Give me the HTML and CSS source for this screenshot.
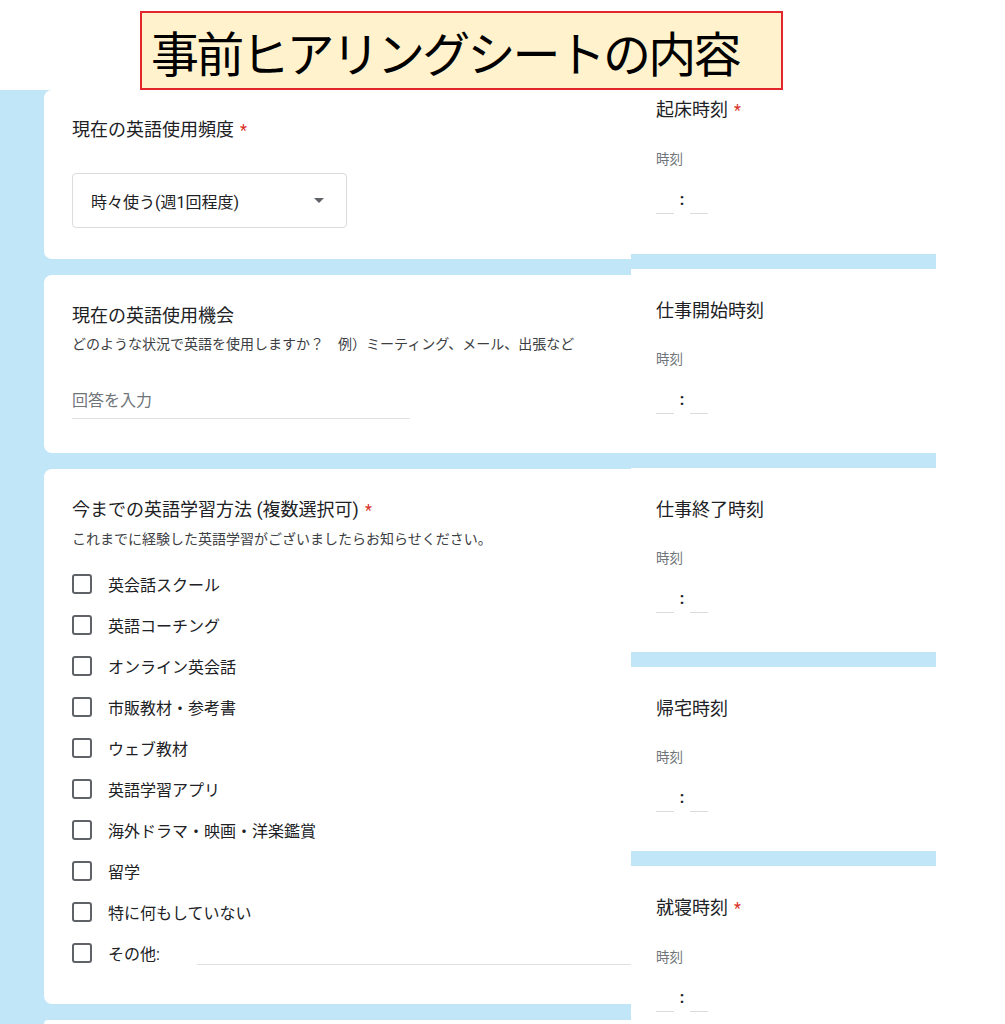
FILE: index.html
```html
<!DOCTYPE html>
<html lang="ja">
<head>
<meta charset="utf-8">
<title>事前ヒアリングシートの内容</title>
<link rel="stylesheet" href="styles.css">
</head>
<body>
<header class="header">
  <h1 class="title">事前ヒアリングシートの内容</h1>
</header>
<main class="board">
  <section class="left">
    <div class="card card-select">
      <div class="q-title">現在の英語使用頻度<span class="req">*</span></div>
      <div class="select">
        <span>時々使う(週1回程度)</span>
        <span class="arrow"></span>
      </div>
    </div>
    <div class="card card-text">
      <div class="q-title">現在の英語使用機会</div>
      <div class="q-desc">どのような状況で英語を使用しますか？　例）ミーティング、メール、出張など</div>
      <div class="text-input">回答を入力</div>
    </div>
    <div class="card card-check">
      <div class="q-title">今までの英語学習方法 (複数選択可)<span class="req">*</span></div>
      <div class="q-desc">これまでに経験した英語学習がございましたらお知らせください。</div>
      <ul class="options">
        <li class="option"><span class="box"></span><span>英会話スクール</span></li>
        <li class="option"><span class="box"></span><span>英語コーチング</span></li>
        <li class="option"><span class="box"></span><span>オンライン英会話</span></li>
        <li class="option"><span class="box"></span><span>市販教材・参考書</span></li>
        <li class="option"><span class="box"></span><span>ウェブ教材</span></li>
        <li class="option"><span class="box"></span><span>英語学習アプリ</span></li>
        <li class="option"><span class="box"></span><span>海外ドラマ・映画・洋楽鑑賞</span></li>
        <li class="option"><span class="box"></span><span>留学</span></li>
        <li class="option"><span class="box"></span><span>特に何もしていない</span></li>
        <li class="option"><span class="box"></span><span>その他:</span><span class="other-line"></span></li>
      </ul>
    </div>
    <div class="card card-next"></div>
  </section>
  <section class="right">
    <div class="panel panel-first">
      <div class="p-title">起床時刻<span class="req">*</span></div>
      <div class="p-sub">時刻</div>
      <div class="time"><span class="tbox"></span><span class="colon">:</span><span class="tbox"></span></div>
    </div>
    <div class="panel">
      <div class="p-title">仕事開始時刻</div>
      <div class="p-sub">時刻</div>
      <div class="time"><span class="tbox"></span><span class="colon">:</span><span class="tbox"></span></div>
    </div>
    <div class="panel">
      <div class="p-title">仕事終了時刻</div>
      <div class="p-sub">時刻</div>
      <div class="time"><span class="tbox"></span><span class="colon">:</span><span class="tbox"></span></div>
    </div>
    <div class="panel">
      <div class="p-title">帰宅時刻</div>
      <div class="p-sub">時刻</div>
      <div class="time"><span class="tbox"></span><span class="colon">:</span><span class="tbox"></span></div>
    </div>
    <div class="panel panel-last">
      <div class="p-title">就寝時刻<span class="req">*</span></div>
      <div class="p-sub">時刻</div>
      <div class="time"><span class="tbox"></span><span class="colon">:</span><span class="tbox"></span></div>
    </div>
  </section>
</main>
</body>
</html>
```
FILE: styles.css
```css
* { box-sizing: border-box; }

html, body {
  margin: 0;
  padding: 0;
  background: #ffffff;
}

body {
  width: 1005px;
  height: 1024px;
  overflow: hidden;
  font-family: Roboto, "Noto Sans CJK JP", sans-serif;
  color: #202124;
}

.header {
  padding: 11px 0 0 140px;
  height: 90px;
}

.title {
  margin: 0;
  width: 643px;
  height: 79px;
  border: 2px solid #e3262b;
  background: #fff2cc;
  display: flex;
  align-items: center;
  padding-left: 9px;
  font-family: "Noto Sans CJK JP", sans-serif;
  font-weight: 400;
  font-size: 48px;
  letter-spacing: -2.8px;
  line-height: 1;
  color: #000000;
}

.board {
  display: flex;
  height: 934px;
}

/* left column */
.left {
  width: 631px;
  background: #c0e6f8;
  padding-left: 44px;
  display: flex;
  flex-direction: column;
  gap: 16px;
}

.card {
  background: #ffffff;
  border-radius: 8px 0 0 8px;
  padding-left: 28px;
}

.card-select { padding-top: 28px; padding-bottom: 31px; }
.card-text { padding-top: 29px; padding-bottom: 34px; }
.card-check { padding-top: 29px; padding-bottom: 31px; }
.card-next { height: 6px; border-radius: 8px 0 0 0; }

.q-title {
  font-size: 18px;
  line-height: 24px;
  color: #202124;
}

.req {
  color: #d93025;
  font-size: 16px;
  margin-left: 6px;
}

.q-desc {
  margin-top: 6px;
  font-size: 14px;
  line-height: 20px;
  color: #3c4043;
}

.select {
  margin-top: 30px;
  width: 275px;
  height: 55px;
  border: 1px solid #dadce0;
  border-radius: 4px;
  display: flex;
  align-items: center;
  justify-content: space-between;
  padding: 0 22px 0 18px;
  font-size: 16px;
  color: #202124;
}

.arrow {
  width: 0;
  height: 0;
  border-left: 5px solid transparent;
  border-right: 5px solid transparent;
  border-top: 5px solid #5f6368;
}

.text-input {
  margin-top: 35px;
  width: 338px;
  font-size: 16px;
  line-height: 24px;
  padding-bottom: 5px;
  border-bottom: 1px solid #e0e0e0;
  color: #70757a;
}

.options {
  list-style: none;
  margin: 14px 0 0 0;
  padding: 0;
}

.option {
  display: flex;
  align-items: center;
  gap: 16px;
  height: 41px;
  font-size: 16px;
  color: #202124;
}

.box {
  width: 20px;
  height: 20px;
  border: 2px solid #5f6368;
  border-radius: 3px;
  flex: none;
}

.other-line {
  flex: 1;
  height: 1px;
  background: #e0e0e0;
  align-self: flex-end;
  margin: 0 0 8px 21px;
}

/* right column */
.right {
  width: 305px;
  background: #c0e6f8;
  display: flex;
  flex-direction: column;
  gap: 15px;
}

.panel {
  background: #ffffff;
  padding: 30px 0 39px 25px;
}

.panel-first { padding-top: 8px; padding-bottom: 40px; }
.panel-last { flex: 1; }

.p-title {
  font-size: 18px;
  line-height: 24px;
  color: #202124;
}

.p-sub {
  margin-top: 26px;
  font-size: 13.5px;
  line-height: 20px;
  color: #70757a;
}

.time {
  margin-top: 16px;
  display: flex;
  align-items: flex-end;
  height: 29px;
}

.tbox {
  width: 18px;
  height: 29px;
  border-bottom: 1px solid #dadce0;
}

.colon {
  width: 16px;
  text-align: center;
  font-size: 16px;
  font-weight: 700;
  line-height: 20px;
  margin-bottom: 4px;
  color: #202124;
}
```
